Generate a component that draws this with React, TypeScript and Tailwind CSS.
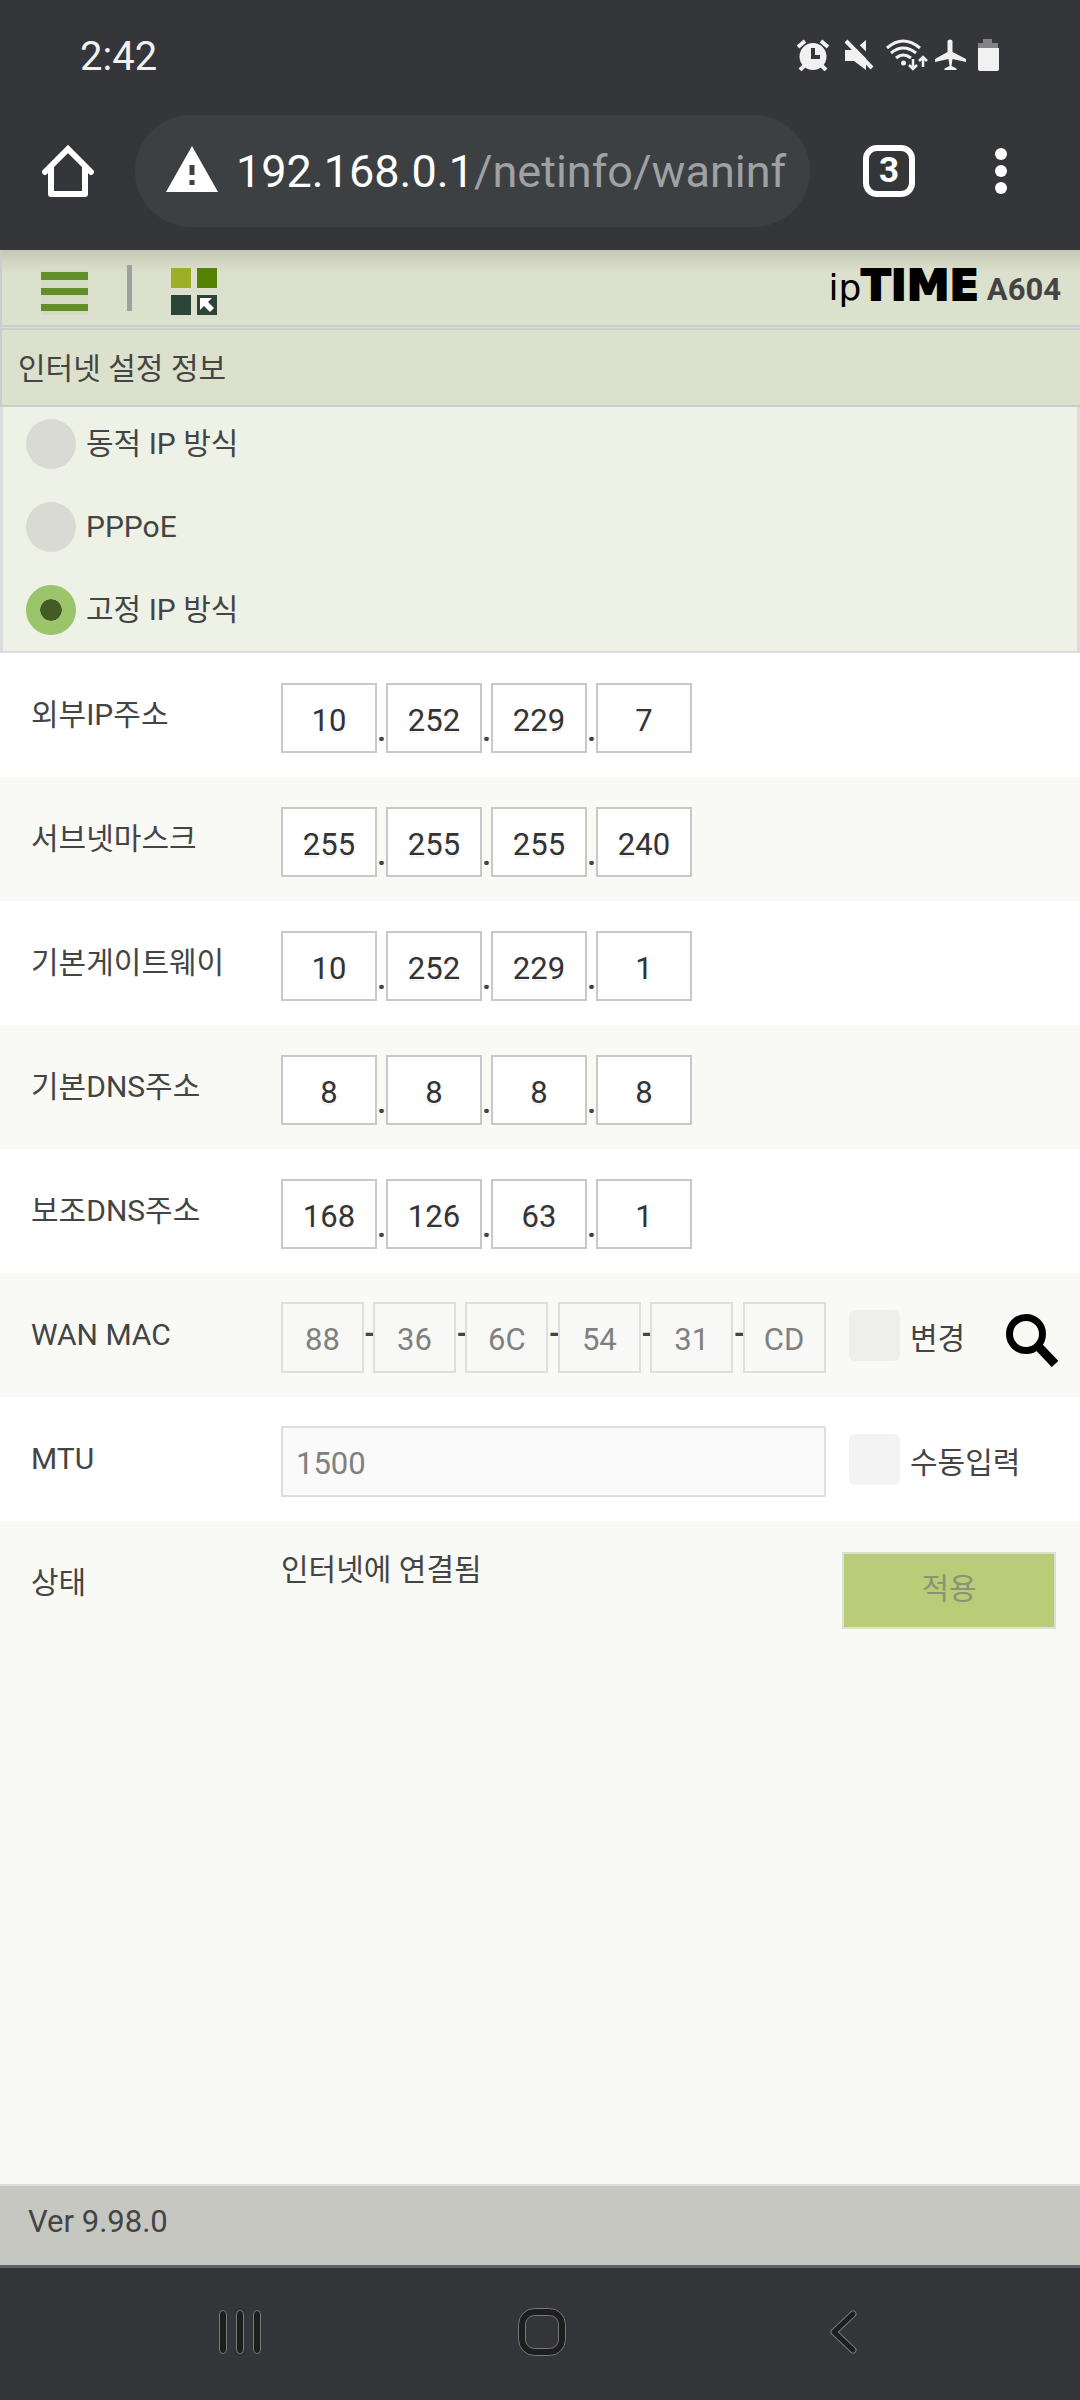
import { useState } from "react";

const FONT = "font-['Roboto','Noto_Sans_CJK_KR',sans-serif]";

type Mode = "dynamic" | "pppoe" | "static";

type AddressRow = {
  id: string;
  label: string;
  parts: string[];
};

const MODES: { id: Mode; label: string }[] = [
  { id: "dynamic", label: "동적 IP 방식" },
  { id: "pppoe", label: "PPPoE" },
  { id: "static", label: "고정 IP 방식" },
];

const ADDRESSES: AddressRow[] = [
  { id: "ip", label: "외부IP주소", parts: ["10", "252", "229", "7"] },
  { id: "mask", label: "서브넷마스크", parts: ["255", "255", "255", "240"] },
  { id: "gateway", label: "기본게이트웨이", parts: ["10", "252", "229", "1"] },
  { id: "dns1", label: "기본DNS주소", parts: ["8", "8", "8", "8"] },
  { id: "dns2", label: "보조DNS주소", parts: ["168", "126", "63", "1"] },
];

const MAC = ["88", "36", "6C", "54", "31", "CD"];

export default function App() {
  const [mode, setMode] = useState<Mode>("static");

  return (
    <div className={`flex min-h-screen flex-col bg-[#f9faf5] text-[30px] leading-9 text-[#444] ${FONT}`}>
      <StatusBar />
      <BrowserBar />

      <header className="flex h-[75px] items-center justify-between border-l-2 border-[#ccc] bg-linear-to-b from-[#c5c8b5] to-[#dce1cd] to-30% pr-[19px] pl-[39px]">
        <div className="flex items-center">
          <button aria-label="메뉴" className="mt-2">
            <svg width="47" height="47" viewBox="0 0 47 47">
              <path fill="#d5dbc5" d="M0 0h47v47H0z" />
              <path fill="#618f2a" d="M0 4h47v8H0zM0 20h47v7H0zM0 36h47v7H0z" />
            </svg>
          </button>
          <span className="ml-[39px] h-[46px] w-[5px] bg-[#a0a0a0]" />
          <button aria-label="바로가기" className="mt-2 ml-[39px]">
            <svg width="46" height="47" viewBox="0 0 46 47">
              <path fill="#9caf27" d="M0 0h20v20H0z" />
              <path fill="#568203" d="M26 0h20v20H26z" />
              <path fill="#2b4437" d="M0 27h20v20H0zM26 27h20v20H26z" />
              <path fill="#fff" d="M29 30h12l-4 4 6 6-4 4-6-6-4 4z" />
            </svg>
          </button>
        </div>
        <a href="#top" className="flex items-baseline">
          <span className="font-['DejaVu_Sans'] text-[36px] text-black">ip</span>
          <span className="font-['DejaVu_Sans'] text-[43px] font-bold text-black [-webkit-text-stroke:2px_#000]">
            TIME
          </span>
          <span className="ml-2 text-[31px] font-bold">A604</span>
        </a>
      </header>

      <h1 className="h-[82px] border-t-[5px] border-b-2 border-l-2 border-[#ccc] bg-[#dce1cd] pl-4 leading-[77px] [border-top-style:double]">
        인터넷 설정 정보
      </h1>

      <fieldset className="flex flex-col gap-8 border-x-[3px] border-b-2 border-[#ddd] bg-[#eef1e6] pt-[11px] pb-4 pl-[23px]">
        {MODES.map((item) => (
          <label key={item.id} className="flex h-[51px] items-center gap-[10px]">
            <input
              type="radio"
              name="mode"
              checked={mode === item.id}
              onChange={() => setMode(item.id)}
              className="size-[50px] appearance-none rounded-full bg-[#d9dad3] bg-clip-padding checked:border-[14px] checked:border-[#9bc46b] checked:bg-[#435b24]"
            />
            {item.label}
          </label>
        ))}
      </fieldset>

      <form className="flex flex-col" onSubmit={(e) => e.preventDefault()}>
        {ADDRESSES.map((row) => (
          <div key={row.id} className="flex h-[124px] items-center odd:bg-white">
            <RowLabel htmlFor={`${row.id}-0`}>{row.label}</RowLabel>
            <div className="flex pt-1.5">
              {row.parts.map((part, i) => (
                <div key={i} className="flex items-end">
                  {i > 0 && <span className="w-[9px] pb-1 text-center font-bold">.</span>}
                  <input
                    id={`${row.id}-${i}`}
                    aria-label={`${row.label} ${i + 1}`}
                    defaultValue={part}
                    className="h-[70px] w-24 border-2 border-[#c8c8c8] bg-white pt-1 text-center text-[31px] text-[#333] [text-shadow:0_3px_1px_#f3f3f3]"
                  />
                </div>
              ))}
            </div>
          </div>
        ))}

        <div className="flex h-[124px] items-center">
          <RowLabel htmlFor="mac-0">WAN MAC</RowLabel>
          <div className="flex w-[545px] items-center pt-1">
            {MAC.map((part, i) => (
              <div key={i} className="flex flex-1 items-center first:flex-none">
                {i > 0 && <span className="w-[9px] pb-2 text-center font-bold">-</span>}
                <input
                  id={`mac-${i}`}
                  aria-label={`WAN MAC ${i + 1}`}
                  defaultValue={part}
                  disabled
                  className="h-[71px] w-[83px] border-2 border-[#dededc] bg-[#f8f8f6] pt-1 text-center text-[31px] text-[#808080]"
                />
              </div>
            ))}
          </div>
          <CheckOption label="변경" boxClass="bg-[#eeeeea]" />
          <button aria-label="검색" className="mt-2.5 mr-[22px] ml-auto">
            <svg width="52" height="53" viewBox="0 0 52 53">
              <circle cx="20" cy="20" r="16.5" fill="none" stroke="#000" strokeWidth="7" />
              <path stroke="#000" strokeWidth="9" d="M31 31l18 19" />
            </svg>
          </button>
        </div>

        <div className="flex h-[124px] items-center bg-white">
          <RowLabel htmlFor="mtu">MTU</RowLabel>
          <div className="w-[545px] pt-1">
            <input
              id="mtu"
              defaultValue="1500"
              disabled
              className="block h-[71px] w-full border-2 border-[#dedede] bg-[#fafafa] px-[13px] pt-1 text-[31px] text-[#808080]"
            />
          </div>
          <CheckOption label="수동입력" boxClass="bg-[#f3f3f3]" />
        </div>

        <div className="flex h-[124px] items-center">
          <span className="w-[281px] pl-[31px]">상태</span>
          <output className="pb-[26px]">인터넷에 연결됨</output>
          <button
            disabled
            className="mt-3.5 mr-6 ml-auto h-[77px] w-[214px] border-2 border-[#dcdfd2] bg-[#b9cd78] pb-0.5 text-[#8a9474]"
          >
            적용
          </button>
        </div>
      </form>

      <footer className="mt-auto h-[84px] border-t-2 border-b-[3px] border-t-[#dcddd9] border-b-[#5c6367] bg-[#c6c7c1] pl-7 text-[31px] leading-[72px]">
        Ver 9.98.0
      </footer>
      <NavBar />
    </div>
  );
}

function RowLabel({ htmlFor, children }: { htmlFor: string; children: string }) {
  return (
    <label htmlFor={htmlFor} className="w-[281px] shrink-0 pl-[31px]">
      {children}
    </label>
  );
}

function CheckOption({ label, boxClass }: { label: string; boxClass: string }) {
  return (
    <label className="ml-[23px] flex items-center gap-[10px] pt-1">
      <input type="checkbox" className={`mb-1 size-[51px] appearance-none rounded-md ${boxClass}`} />
      <span className="pt-1">{label}</span>
    </label>
  );
}

function StatusBar() {
  return (
    <div className="flex h-[115px] items-center justify-between bg-[#353639] pr-[81px] pb-0.5 pl-20 text-[40px] text-[#f1f1f1]">
      <span>2:42</span>
      <svg width="203" height="32" viewBox="0 0 203 32" fill="#f1f1f1" className="-mt-1">
        {/* alarm */}
        <circle cx="17" cy="17.5" r="13.5" />
        <path stroke="#f1f1f1" strokeWidth="4" d="M2 8l7-6M32 8l-7-6M4 31l5-5M30 31l-5-5" />
        <path fill="none" stroke="#353639" strokeWidth="4" d="M17 9v9h7" />
        {/* muted speaker */}
        <path d="M49 11h9l12-10v30L58 22h-9z" />
        <path stroke="#353639" strokeWidth="5" d="M54 0l28 28" />
        <path stroke="#f1f1f1" strokeWidth="4" d="M50 2l26 27" />
        {/* wifi */}
        <g fill="none" stroke="#f1f1f1" strokeWidth="3">
          <path d="M91 9q16-14 33 0M95 14q12-10 25 0M100 19q7-6 15 0" />
          <path strokeWidth="2.5" d="M117 20v9M113 26l4 4 4-4M127 28v-10M123 22l4-4 4 4" />
        </g>
        <circle cx="107.500" cy="24" r="2.500" />
        {/* airplane */}
        <path d="M151.500 2q0-1.500 2.500-1.500t2.500 1.500v11l13.500 7v3l-13.500-3-1 7 5 2.500v1.500h-12v-1.500l5-2.500-1-7-13.500 3v-3l12.500-7z" />
        {/* battery */}
        <path fill="#838385" d="M187 0h9v4h6v5h-20V4h5z" />
        <path d="M182 9h21v21q0 2-2 2h-17q-2 0-2-2z" />
      </svg>
    </div>
  );
}

function BrowserBar() {
  return (
    <div className="flex h-[135px] items-start bg-[#353639] pr-[73px] pl-[42px]">
      <button aria-label="홈" className="mt-[30px]">
        <svg width="52" height="53" viewBox="0 0 52 53" fill="none" stroke="#fff" strokeWidth="6">
          <path strokeLinecap="round" d="M3 27L26 4l23 23" />
          <path strokeLinejoin="round" d="M9 21v28h34V21" />
        </svg>
      </button>
      <button className="ml-[41px] flex h-28 min-w-0 flex-1 items-center rounded-full bg-[#3c4042] pl-[31px] text-[45px] leading-[56px]">
        <svg width="52" height="46" viewBox="0 0 52 46" className="mb-1 shrink-0">
          <path fill="#fff" d="M26 0l26 46H0z" />
          <path fill="#3c4042" d="M23.500 19h5v10h-5zM23.500 34h5v5h-5z" />
        </svg>
        <span className="ml-[18px] pt-0.5 whitespace-nowrap text-white">
          192.168.0.1<span className="text-[#9fa1a3]">/netinfo/waninf</span>
        </span>
      </button>
      <button
        aria-label="탭 3개"
        className="mt-[30px] ml-[53px] size-[52px] rounded-[14px] border-[6px] border-white text-center text-[35px] leading-10 font-bold text-white"
      >
        3
      </button>
      <button aria-label="더보기" className="mt-[32px] ml-20">
        <svg width="12" height="48" viewBox="0 0 12 48" fill="#fff">
          <circle cx="6" cy="7" r="6" />
          <circle cx="6" cy="24" r="6" />
          <circle cx="6" cy="41" r="6" />
        </svg>
      </button>
    </div>
  );
}

function NavBar() {
  return (
    <nav className="flex h-[132px] items-center justify-between bg-[#343539] pr-[222px] pb-[5px] pl-[218px]">
      <button aria-label="최근 앱">
        <svg width="44" height="48" viewBox="0 0 44 48" fill="#1e1e1f" stroke="#77787a">
          <rect x="1.500" y="2.500" width="7" height="43" rx="3.500" />
          <rect x="18.500" y="2.500" width="7" height="43" rx="3.500" />
          <rect x="35.500" y="2.500" width="7" height="43" rx="3.500" />
        </svg>
      </button>
      <button aria-label="홈 화면" className="mr-1.5">
        <svg width="48" height="48" viewBox="0 0 48 48" stroke="#77787a">
          <rect x=".5" y=".5" width="47" height="47" rx="16" fill="#1e1e1f" />
          <rect x="7.500" y="7.500" width="33" height="33" rx="9" fill="#343539" />
        </svg>
      </button>
      <button aria-label="뒤로">
        <svg width="30" height="48" viewBox="0 0 30 48" fill="none" strokeLinecap="round" strokeLinejoin="round">
          <path stroke="#77787a" strokeWidth="7" d="M25 6L6 24l19 18" />
          <path stroke="#1e1e1f" strokeWidth="5" d="M25 6L6 24l19 18" />
        </svg>
      </button>
    </nav>
  );
}
